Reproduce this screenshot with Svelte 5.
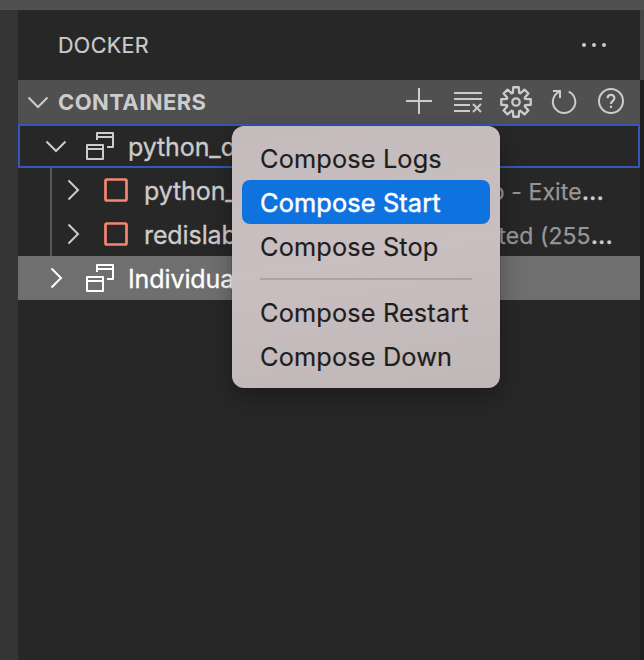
<script>
  const rows = [
    { kind: 'group', open: true, name: 'python_d', focused: true },
    { kind: 'item', name: 'python_', desc: 'o - Exite', end: 36 },
    { kind: 'item', name: 'redislab', desc: 'ted (255', end: 27 },
    { kind: 'group', open: false, name: 'Individua', hovered: true }
  ];
  const menu = ['Compose Logs', 'Compose Start', 'Compose Stop', null, 'Compose Restart', 'Compose Down'];
  const gear = Array.from({ length: 8 }, (_, i) => {
    const at = (r, d) => {
      const a = ((i * 45 + d) * Math.PI) / 180;
      return `${(17 + r * Math.sin(a)).toFixed(2)} ${(17 - r * Math.cos(a)).toFixed(2)}`;
    };
    return `${i ? 'L' : 'M'}${at(9.7, -19)} L${at(15, -10.5)} L${at(15, 10.5)} L${at(9.7, 19)}`;
  }).join(' ') + 'Z';
</script>

{#snippet chevron(open)}
  <svg class="chevron" width="22" height="22" viewBox="0 0 22 22">
    <path d={open ? 'M1.5 6.5 11 16 20.5 6.5' : 'M6.5 1.5 16 11 6.5 20.5'} />
  </svg>
{/snippet}

<div class="window">
  <div class="titlebar"></div>
  <div class="body">
    <div class="activity"></div>
    <div class="sidebar">
      <header>
        <span class="title">DOCKER</span>
        <svg width="28" height="6" viewBox="0 0 28 6" class="more">
          <circle cx="4" cy="3" r="2" /><circle cx="14" cy="3" r="2" /><circle cx="24" cy="3" r="2" />
        </svg>
      </header>
      <div class="section">
        {@render chevron(true)}
        <span class="heading">CONTAINERS</span>
        <div class="actions">
          <svg width="34" height="34" viewBox="0 0 34 34"><path d="M4 16H30M17 3V29" /></svg>
          <svg width="34" height="34" viewBox="0 0 34 34"><path d="M4 8H32M4 14H32M4 20H20M4 26H20" /><path d="M23 19 31 27M31 19 23 27" /></svg>
          <svg width="34" height="34" viewBox="0 0 34 34"><path class="gear" d={gear} transform="translate(1 0)" /><circle class="gear" cx="18" cy="17" r="3.7" /></svg>
          <svg width="34" height="34" viewBox="0 0 34 34"><path d="M6 6H13V13M12.5 6.6A11.2 11.2 0 1 0 21.7 6.6" transform="translate(1 0)" /></svg>
          <svg width="34" height="34" viewBox="0 0 34 34"><circle cx="17" cy="16" r="12" /><path class="query" d="M13.6 13.2C13.6 8.7 20.4 8.8 20.4 13C20.4 16 17 15.7 17 19M17 20.7V23" /></svg>
        </div>
      </div>
      <div class="tree">
        {#each rows as row}
          <div class="row {row.kind}" class:focused={row.focused} class:hovered={row.hovered}>
            {@render chevron(row.open)}
            {#if row.kind === 'group'}
              <svg class="stack" width="30" height="30" viewBox="0 0 30 30">
                <path d="M12 9V2H28V16H22M12 6H28M2 14H18V28H2ZM2 18H18" />
              </svg>
            {:else}
              <svg class="box" width="26" height="26" viewBox="0 0 26 26"><rect x="2.5" y="2.5" width="21" height="21" rx="1.5" /></svg>
            {/if}
            <span class="name">{row.name}</span>
            {#if row.desc}
              <span class="desc" style="margin-right: {row.end}px">{row.desc}<b>...</b></span>
            {/if}
          </div>
        {/each}
      </div>
    </div>
    <div class="edge"></div>
  </div>

  <div class="menu">
    {#each menu as label, i}
      {#if label}
        <div class="entry" class:active={i === 1}>{label}</div>
      {:else}
        <div class="separator"></div>
      {/if}
    {/each}
  </div>
</div>

<style>
  :global(body) { background: #272727; }
  .window {
    position: relative;
    width: 644px;
    height: 660px;
    overflow: hidden;
    display: flex;
    flex-direction: column;
    background: #272727;
    color: #cccccc;
    font-family: Inter, "Liberation Sans", sans-serif;
    box-sizing: border-box;
  }
  .titlebar { height: 10px; background: #505050; }
  .body { flex: 1; display: flex; }
  .activity { width: 18px; background: #353535; }
  .sidebar { width: 622px; }
  .edge { width: 4px; background: linear-gradient(#454545 70px, #1e1e1e 70px); }
  header {
    height: 70px;
    display: flex;
    align-items: center;
    justify-content: space-between;
    padding: 0 32px 0 40px;
    box-sizing: border-box;
  }
  .title { font-size: 21.5px; letter-spacing: 0.35px; -webkit-text-stroke: 0.2px; }
  .section {
    height: 44px;
    display: flex;
    align-items: center;
    background: #505050;
    padding: 0 12px 0 9px;
  }
  svg { flex: none; fill: none; stroke: #cccccc; stroke-width: 2; }
  .more { fill: #cccccc; stroke: none; }
  .heading { font-size: 22px; font-weight: 700; margin-left: 9px; letter-spacing: 0.4px; }
  .actions { display: flex; gap: 14px; margin-left: auto; }
  .gear { stroke-width: 2.3; stroke-linejoin: round; }
  .query { stroke-width: 2.2; }
  .row {
    height: 44px;
    display: flex;
    align-items: center;
    box-sizing: border-box;
    white-space: nowrap;
    font-size: 25px;
  }
  .group { padding-left: 27px; }
  .focused { border: 2px solid #3558b8; padding-left: 25px; }
  .hovered { background: #6f6f6f; color: white; }
  .hovered svg { stroke: white; }
  .item { margin-left: 32px; padding-left: 10px; border-left: 2px solid #585858; }
  .stack { margin: 0 13px 0 18px; stroke-linejoin: round; }
  .box { margin: 0 15px 0 19px; }
  .box rect { stroke: #f48771; stroke-width: 2.7; }
  .name { letter-spacing: -0.1px; padding-top: 2px; -webkit-text-stroke: 0.3px; }
  .desc { margin-left: auto; padding-top: 3px; color: #969696; font-size: 23px; letter-spacing: 0.1px; -webkit-text-stroke: 0.25px; }
  .desc b { color: #cccccc; font-weight: 600; }
  .menu {
    position: absolute;
    left: 232px;
    top: 126px;
    width: 268px;
    height: 262px;
    padding: 10px;
    box-sizing: border-box;
    border-radius: 12px;
    background: linear-gradient(170deg, #c4bbbc, #c9bfc0 50%, #c0b7b8);
    box-shadow: 0 0 1px #111, 0 8px 24px rgba(0, 0, 0, 0.3);
    color: #1e1e1e;
  }
  .entry {
    height: 44px;
    line-height: 46px;
    padding-left: 18px;
    border-radius: 8px;
    font-size: 25.3px;
    letter-spacing: 0.15px;
    white-space: nowrap;
    -webkit-text-stroke: 0.2px;
  }
  .active { background: #0e73df; color: white; -webkit-text-stroke: 0.5px; }
  .separator { height: 2px; margin: 10px 18px; background: #aca3a4; }
</style>
